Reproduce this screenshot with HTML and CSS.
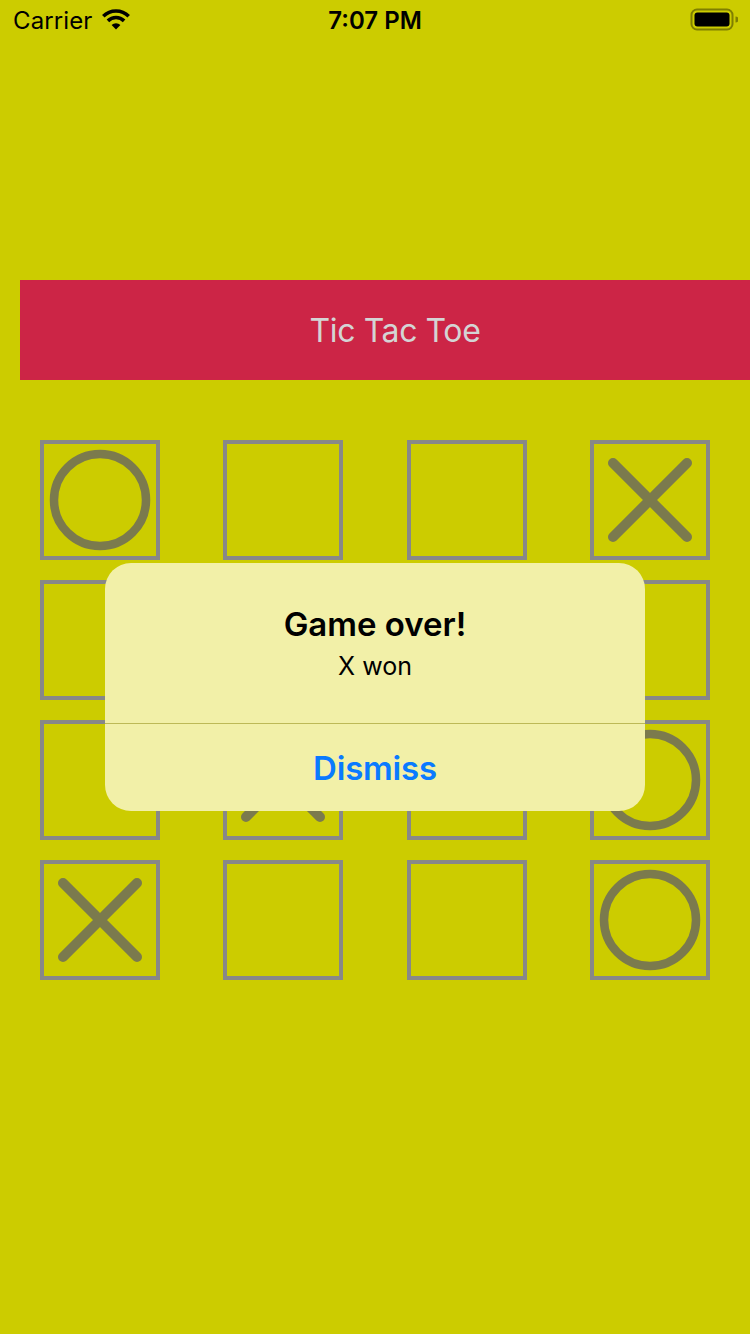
FILE: index.html
```html
<!DOCTYPE html>
<html>
<head>
<meta charset="utf-8">
<link rel="stylesheet" href="styles.css">
</head>
<body>
<div class="screen">
  <div class="status">
    <div class="status-left">
      <span class="carrier">Carrier</span>
      <svg class="wifi" width="30" height="22" viewBox="0 0 30 22">
        <path d="M2.3 8.3 A18 18 0 0 1 27.7 8.3" fill="none" stroke="#000" stroke-width="3.6"/>
        <path d="M6.9 12.9 A11.5 11.5 0 0 1 23.1 12.9" fill="none" stroke="#000" stroke-width="3.6"/>
        <path d="M15 21.5 L10.6 17.1 A6.2 6.2 0 0 1 19.4 17.1 Z" fill="#000"/>
      </svg>
    </div>
    <div class="time">7:07 PM</div>
    <div class="status-right">
      <svg width="48" height="24" viewBox="0 0 48 24">
        <rect x="1.5" y="1.5" width="41" height="20" rx="5.5" fill="none" stroke="#7f7f00" stroke-width="2"/>
        <rect x="4.5" y="4.5" width="35" height="14" rx="3" fill="#000"/>
        <path d="M45.5 8.5 a3 3 0 0 1 0 6 Z" fill="#7f7f00"/>
      </svg>
    </div>
  </div>

  <div class="title-bar">Tic Tac Toe</div>

  <div class="board">
    <div class="cell"><svg viewBox="0 0 112 112"><circle cx="56" cy="56" r="46" class="mark"/></svg></div>
    <div class="cell"></div>
    <div class="cell"></div>
    <div class="cell"><svg viewBox="0 0 112 112"><path d="M19 19 L93 93 M93 19 L19 93" class="mark x"/></svg></div>

    <div class="cell"></div>
    <div class="cell"></div>
    <div class="cell"><svg viewBox="0 0 112 112"><path d="M19 19 L93 93 M93 19 L19 93" class="mark x"/></svg></div>
    <div class="cell"></div>

    <div class="cell"></div>
    <div class="cell"><svg viewBox="0 0 112 112"><path d="M19 19 L93 93 M93 19 L19 93" class="mark x"/></svg></div>
    <div class="cell"></div>
    <div class="cell"><svg viewBox="0 0 112 112"><circle cx="56" cy="56" r="46" class="mark"/></svg></div>

    <div class="cell"><svg viewBox="0 0 112 112"><path d="M19 19 L93 93 M93 19 L19 93" class="mark x"/></svg></div>
    <div class="cell"></div>
    <div class="cell"></div>
    <div class="cell"><svg viewBox="0 0 112 112"><circle cx="56" cy="56" r="46" class="mark"/></svg></div>
  </div>

  <div class="alert">
    <div class="alert-body">
      <div class="alert-title">Game over!</div>
      <div class="alert-msg">X won</div>
    </div>
    <div class="alert-btn">Dismiss</div>
  </div>
</div>
</body>
</html>
```

FILE: styles.css
```css
html, body {
  margin: 0;
  padding: 0;
}
body {
  background: #cccc00;
  width: 750px;
  height: 1334px;
  overflow: hidden;
  font-family: Inter, "Liberation Sans", sans-serif;
}
.screen {
  position: relative;
  width: 750px;
  height: 1334px;
  overflow: hidden;
}
.status {
  height: 40px;
  display: flex;
  align-items: center;
  justify-content: space-between;
  padding: 0 12px 0 13px;
  position: relative;
}
.status-left {
  display: flex;
  align-items: center;
  gap: 9px;
  width: 200px;
}
.carrier {
  font-size: 24px;
  color: #000;
  letter-spacing: 0.1px;
}
.wifi {
  margin-top: -2px;
}
.time {
  position: absolute;
  left: 0;
  right: 0;
  text-align: center;
  font-size: 24px;
  font-weight: 600;
  color: #000;
}
.status-right {
  width: 200px;
  display: flex;
  justify-content: flex-end;
  margin-top: -1px;
}
.title-bar {
  margin-top: 240px;
  margin-left: 20px;
  width: 750px;
  height: 100px;
  background: #cc2546;
  color: #d4d4d4;
  font-size: 32px;
  font-weight: 400;
  letter-spacing: -0.4px;
  display: flex;
  align-items: center;
  justify-content: center;
}
.board {
  margin: 60px 40px 0;
  display: grid;
  grid-template-columns: repeat(4, 120px);
  justify-content: space-between;
  row-gap: 20px;
}
.cell {
  width: 120px;
  height: 120px;
  box-sizing: border-box;
  border: 4px solid #888888;
}
.cell svg {
  display: block;
  width: 112px;
  height: 112px;
}
.mark {
  fill: none;
  stroke: #7b7a4d;
  stroke-width: 8.5;
}
.mark.x {
  stroke-width: 10;
  stroke-linecap: round;
}
.alert {
  position: absolute;
  left: 105px;
  top: 563px;
  width: 540px;
  height: 248px;
  border-radius: 26px;
  background: #f2f0a8;
  display: flex;
  flex-direction: column;
  overflow: hidden;
}
.alert-body {
  height: 161px;
  border-bottom: 1px solid #bdb957;
  display: flex;
  flex-direction: column;
  align-items: center;
  padding-top: 40px;
  box-sizing: border-box;
}
.alert-title {
  font-size: 33px;
  font-weight: 600;
  color: #000;
  line-height: 42px;
}
.alert-msg {
  font-size: 25px;
  color: #000;
  line-height: 34px;
  margin-top: 4px;
}
.alert-btn {
  flex: 1;
  display: flex;
  align-items: center;
  justify-content: center;
  color: #0a7aff;
  font-size: 33px;
  font-weight: 600;
  letter-spacing: -0.2px;
}
```
